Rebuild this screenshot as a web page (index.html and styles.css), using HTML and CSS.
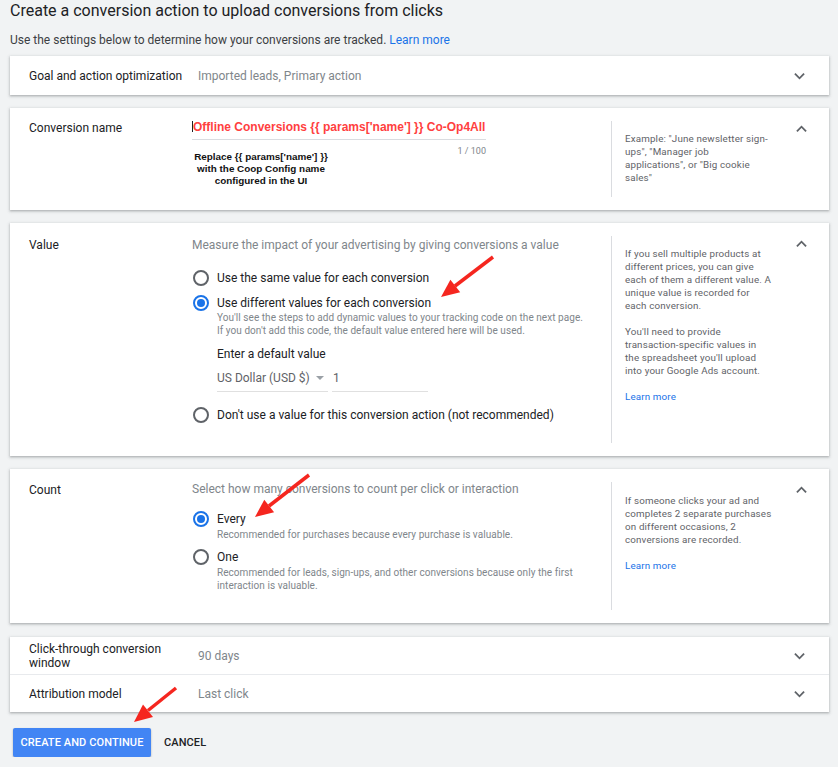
FILE: index.html
```html
<!DOCTYPE html>
<html>
<head>
<meta charset="utf-8">
<link rel="stylesheet" href="styles.css">
</head>
<body>
<div class="page">
  <h1 class="title">Create a conversion action to upload conversions from clicks</h1>
  <p class="intro">Use the settings below to determine how your conversions are tracked. <a class="link">Learn more</a></p>

  <section class="card row-card">
    <div class="collapsed-row">
      <div class="c-label">Goal and action optimization</div>
      <div class="c-value">Imported leads, Primary action</div>
      <svg class="chev" viewBox="0 0 12 8"><polyline points="1,1.5 6,6.5 11,1.5"/></svg>
    </div>
  </section>

  <section class="card grid-card name-card">
    <div class="label">Conversion name</div>
    <div class="content">
      <div class="name-input"><span class="cursor"></span>Offline Conversions {{ params['name'] }} Co-Op4All</div>
      <div class="counter">1 / 100</div>
      <div class="annotation">Replace {{ params['name'] }}<br>with the Coop Config name<br>configured in the UI</div>
    </div>
    <div class="help">Example: "June newsletter sign-<br>ups", "Manager job<br>applications", or "Big cookie<br>sales"</div>
    <svg class="chev up" viewBox="0 0 12 8"><polyline points="1,6.5 6,1.5 11,6.5"/></svg>
  </section>

  <section class="card grid-card value-card">
    <div class="label">Value</div>
    <div class="content">
      <div class="lead">Measure the impact of your advertising by giving conversions a value</div>
      <div class="radio-row r1"><span class="radio"></span><span>Use the same value for each conversion</span></div>
      <div class="radio-row r2"><span class="radio on"></span><span>Use different values for each conversion</span></div>
      <div class="sub">You'll see the steps to add dynamic values to your tracking code on the next page.<br>If you don't add this code, the default value entered here will be used.</div>
      <div class="default-label">Enter a default value</div>
      <div class="default-fields">
        <div class="currency">US Dollar (USD $)<span class="caret"></span></div>
        <div class="amount">1</div>
      </div>
      <div class="radio-row r3"><span class="radio"></span><span>Don't use a value for this conversion action (not recommended)</span></div>
    </div>
    <div class="help">
      <p>If you sell multiple products at<br>different prices, you can give<br>each of them a different value. A<br>unique value is recorded for<br>each conversion.</p>
      <p>You'll need to provide<br>transaction-specific values in<br>the spreadsheet you'll upload<br>into your Google Ads account.</p>
      <p><a class="link">Learn more</a></p>
    </div>
    <svg class="chev up" viewBox="0 0 12 8"><polyline points="1,6.5 6,1.5 11,6.5"/></svg>
  </section>

  <section class="card grid-card count-card">
    <div class="label">Count</div>
    <div class="content">
      <div class="lead">Select how many conversions to count per click or interaction</div>
      <div class="radio-row e1"><span class="radio on"></span><span>Every</span></div>
      <div class="sub">Recommended for purchases because every purchase is valuable.</div>
      <div class="radio-row e2"><span class="radio"></span><span>One</span></div>
      <div class="sub">Recommended for leads, sign-ups, and other conversions because only the first<br>interaction is valuable.</div>
    </div>
    <div class="help">
      <p>If someone clicks your ad and<br>completes 2 separate purchases<br>on different occasions, 2<br>conversions are recorded.</p>
      <p><a class="link">Learn more</a></p>
    </div>
    <svg class="chev up" viewBox="0 0 12 8"><polyline points="1,6.5 6,1.5 11,6.5"/></svg>
  </section>

  <section class="card row-card last-card">
    <div class="collapsed-row tall">
      <div class="c-label">Click-through conversion<br>window</div>
      <div class="c-value">90 days</div>
      <svg class="chev" viewBox="0 0 12 8"><polyline points="1,1.5 6,6.5 11,1.5"/></svg>
    </div>
    <div class="collapsed-row divided">
      <div class="c-label">Attribution model</div>
      <div class="c-value">Last click</div>
      <svg class="chev" viewBox="0 0 12 8"><polyline points="1,1.5 6,6.5 11,1.5"/></svg>
    </div>
  </section>

  <div class="actions">
    <button class="btn primary">CREATE AND CONTINUE</button>
    <button class="btn flat">CANCEL</button>
  </div>
</div>

<svg class="arrows" width="838" height="767" viewBox="0 0 838 767">
  <g class="arrow">
    <line x1="493" y1="257" x2="455" y2="286"/>
    <polygon points="441,297 460.2,292.3 450.4,279.7"/>
  </g>
  <g class="arrow">
    <line x1="309" y1="475" x2="269" y2="506"/>
    <polygon points="255,517 274.1,512.3 264.3,499.7"/>
  </g>
  <g class="arrow">
    <line x1="176" y1="688" x2="148" y2="710.5"/>
    <polygon points="134,722 153,716.9 143,704.5"/>
  </g>
</svg>
</body>
</html>
```

FILE: styles.css
```css
* { box-sizing: border-box; }
html, body {
  margin: 0;
  padding: 0;
  background: #f1f3f4;
  font-family: Roboto, "Noto Sans", Arial, sans-serif;
  color: #202124;
}
.page {
  padding: 0 9px 0 10px;
}
.title {
  margin: 0;
  font-size: 16px;
  font-weight: 400;
  line-height: 22px;
  color: #202124;
}
.intro {
  margin: 7px 0 0;
  font-size: 12px;
  line-height: 22px;
  color: #3c4043;
}
.link {
  color: #1a73e8;
  text-decoration: none;
}
.card {
  background: #fff;
  box-shadow: 0 1px 2px rgba(60,64,67,0.3), 0 1px 3px 1px rgba(60,64,67,0.12);
  margin-top: 13px;
  position: relative;
}
.row-card { margin-top: 5px; }
.collapsed-row {
  display: flex;
  align-items: center;
  height: 39px;
  padding-left: 19px;
}
.collapsed-row.tall { height: 37px; }
.collapsed-row.divided { border-top: 1px solid #e8eaed; height: 38px; }
.c-label {
  width: 169px;
  font-size: 12px;
  line-height: 14px;
  color: #202124;
}
.c-value {
  flex: 1;
  font-size: 12px;
  color: #80868b;
}
.chev {
  width: 11px;
  height: 8px;
  margin-right: 24px;
  fill: none;
  stroke: #5f6368;
  stroke-width: 2;
}
.last-card { margin-top: 14px; }

.grid-card {
  display: grid;
  grid-template-columns: 163px 419px 163px 1fr;
  padding-left: 19px;
}
.grid-card .chev.up {
  align-self: start;
  justify-self: start;
  margin-top: 17px;
  margin-left: 22px;
}
.label {
  font-size: 12px;
  padding-top: 13px;
  line-height: 14px;
  color: #202124;
}
.content { padding-top: 13px; }
.help {
  margin: 13px 0;
  border-left: 1px solid #dadce0;
  padding: 11px 0 0 13px;
  font-size: 9.8px;
  line-height: 13px;
  color: #5f6368;
  letter-spacing: 0.15px;
  white-space: nowrap;
}
.help p { margin: 0 0 13px; }

/* name card */
.name-card { height: 102px; }
.name-card .label { padding-top: 13px; }
.name-input {
  position: relative;
  width: 294px;
  white-space: nowrap;
  font-family: "Liberation Sans", Arial, sans-serif;
  font-weight: 700;
  font-size: 12px;
  line-height: 14px;
  color: #ff4040;
  padding: 0 0 5px 0;
  border-bottom: 1px solid #dadce0;
  margin-top: -1px;
}
.cursor {
  display: inline-block;
  width: 1px;
  height: 11px;
  background: #202124;
  vertical-align: -1px;
}
.counter {
  width: 294px;
  text-align: right;
  font-size: 9px;
  color: #80868b;
  line-height: 11px;
  margin-top: 6px;
}
.annotation {
  width: 140px;
  text-align: center;
  font-family: "Liberation Sans", Arial, sans-serif;
  font-weight: 700;
  font-size: 9.9px;
  line-height: 12px;
  color: #111;
  margin-top: -6px;
  margin-left: -1px;
}

/* value card */
.value-card { height: 233px; }
.value-card .label, .value-card .content { padding-top: 15px; }
.lead {
  font-size: 12px;
  line-height: 14px;
  color: #80868b;
}
.radio-row {
  display: flex;
  align-items: center;
  gap: 8px;
  font-size: 12px;
  line-height: 16px;
  color: #202124;
  margin-left: 1px;
}
.radio {
  width: 16px;
  height: 16px;
  border: 2px solid #5f6368;
  border-radius: 50%;
  flex: none;
  position: relative;
}
.radio.on { border-color: #1a73e8; }
.radio.on::after {
  content: "";
  position: absolute;
  left: 2px; top: 2px;
  width: 8px; height: 8px;
  border-radius: 50%;
  background: #1a73e8;
}
.r1 { margin-top: 18px; }
.r2 { margin-top: 9px; }
.sub {
  margin-left: 25px;
  font-size: 10px;
  line-height: 13px;
  color: #80868b;
  letter-spacing: 0.05px;
}
.value-card .sub { margin-top: 0; }
.default-label {
  margin-left: 25px;
  margin-top: 10px;
  font-size: 12px;
  line-height: 14px;
  color: #202124;
}
.default-fields {
  display: flex;
  margin-left: 25px;
  margin-top: 10px;
  gap: 4px;
}
.currency, .amount {
  font-size: 12px;
  line-height: 14px;
  color: #5f6368;
  padding-bottom: 6px;
  border-bottom: 1px solid #e0e0e0;
}
.currency {
  width: 111px;
  display: flex;
  align-items: center;
}
.caret {
  margin-left: 6px;
  width: 0; height: 0;
  border-left: 4px solid transparent;
  border-right: 4px solid transparent;
  border-top: 4px solid #9aa0a6;
}
.amount { width: 96px; padding-left: 1px; }
.r3 { margin-top: 15px; }

/* count card */
.count-card { height: 154px; }
.count-card .content { padding-top: 13px; }
.count-card .label { padding-top: 14px; }
.count-card .help { padding-top: 12px; }
.e1 { margin-top: 15px; }
.e2 { margin-top: 8px; }
.count-card .sub { margin-top: 1px; }

/* actions */
.actions {
  display: flex;
  align-items: center;
  gap: 13px;
  margin-top: 16px;
  padding-left: 3px;
}
.btn {
  font-family: Roboto, Arial, sans-serif;
  font-size: 11px;
  font-weight: 500;
  letter-spacing: 0.1px;
  border: none;
  background: none;
  padding: 0;
  cursor: pointer;
}
.primary {
  background: #4285f4;
  color: #fff;
  height: 29px;
  width: 138px;
  border-radius: 2px;
  box-shadow: 0 1px 2px rgba(0,0,0,0.3);
}
.flat { color: #202124; }

.arrows {
  position: absolute;
  left: 0;
  top: 0;
  pointer-events: none;
}
.arrow line {
  stroke: #f5261f;
  stroke-width: 3.5;
}
.arrow polygon { fill: #f5261f; }
```
